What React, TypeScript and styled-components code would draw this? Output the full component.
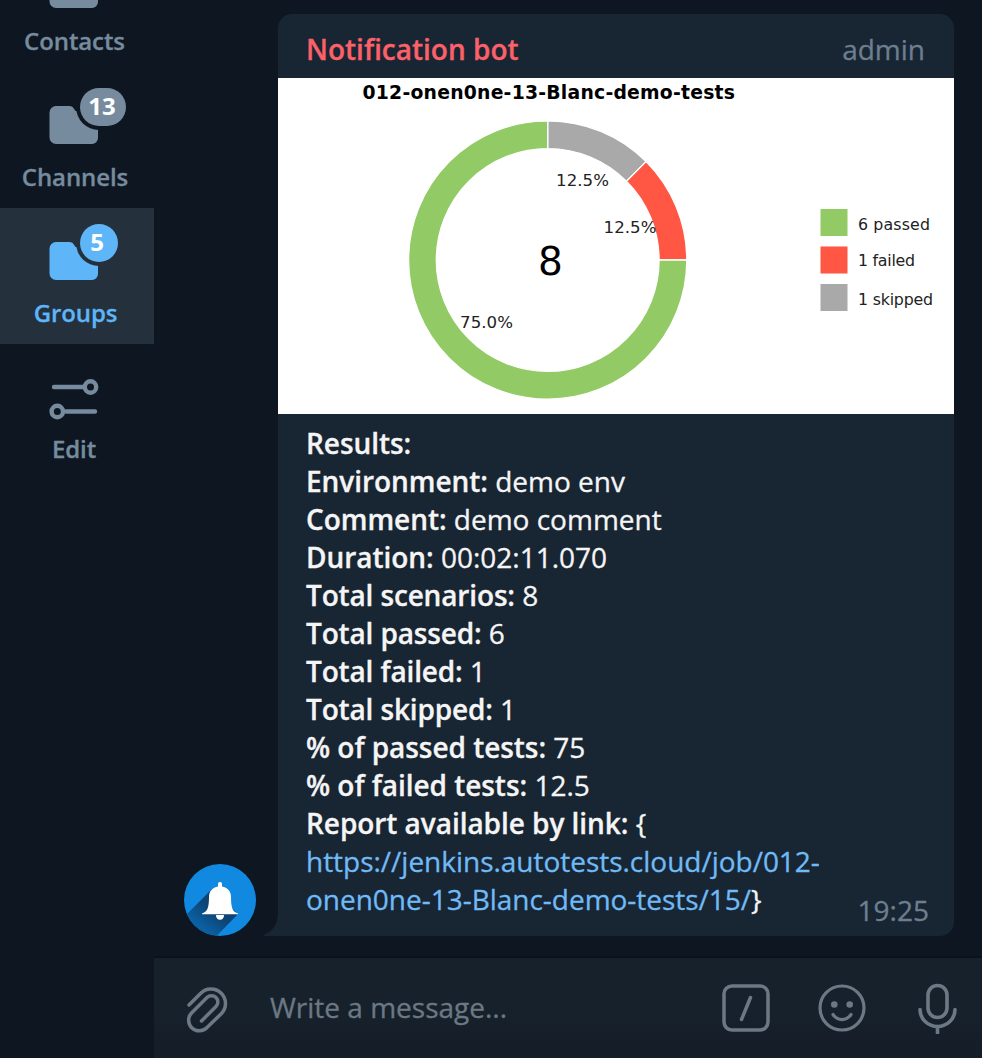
import React from "react";
import styled, { createGlobalStyle } from "styled-components";

const GlobalStyle = createGlobalStyle`
  * { box-sizing: border-box; }
  html, body { margin: 0; padding: 0; background: #0e1621; }
  body { font-family: "Open Sans", "Noto Sans", sans-serif; overflow: hidden; }
`;

const Window = styled.div`
  display: flex;
  width: 982px;
  height: 1058px;
  overflow: hidden;
  background: #0e1621;
  -webkit-text-stroke: 0.3px;
`;

const Sidebar = styled.nav`
  display: flex;
  flex-direction: column;
  flex: none;
  width: 154px;
  margin-top: -64px;
`;

const Folder = styled.div<{ $active?: boolean }>`
  display: flex;
  flex-direction: column;
  align-items: center;
  flex: none;
  height: 136px;
  background: ${(p) => (p.$active ? "#25303d" : "transparent")};
  color: ${(p) => (p.$active ? "#5eb5f7" : "#768c9e")};
`;

const FolderIcon = styled.svg`
  display: block;
  flex: none;
  width: 154px;
  height: 88px;
`;

const FolderLabel = styled.span<{ $shift?: number }>`
  font-size: 24px;
  font-weight: 600;
  line-height: 34px;
  letter-spacing: -0.1px;
  margin-left: ${(p) => p.$shift ?? -4}px;
`;

const BadgeText = styled.text`
  font: 700 24px "Open Sans", sans-serif;
  fill: #fff;
  text-anchor: middle;
`;

const Main = styled.main`
  display: flex;
  flex-direction: column;
  flex: 1;
  min-width: 0;
`;

const Thread = styled.section`
  display: flex;
  align-items: flex-end;
  flex: none;
  height: 956px;
  padding: 14px 28px 20px 30px;
`;

const Avatar = styled.svg`
  display: block;
  flex: none;
  width: 72px;
  height: 72px;
`;

const Tail = styled.svg`
  display: block;
  flex: none;
  width: 14px;
  height: 24px;
  margin-left: 8px;
`;

const Bubble = styled.article`
  display: flex;
  flex-direction: column;
  width: 676px;
  height: 922px;
  overflow: hidden;
  border-radius: 14px 14px 14px 0;
  background: #182533;
`;

const BubbleHeader = styled.header`
  display: flex;
  justify-content: space-between;
  flex: none;
  height: 64px;
  padding: 16px 29px 0 28px;
  font-size: 28px;
  line-height: 38px;
`;

const Sender = styled.span`
  font-weight: 600;
  color: #fb6169;
`;

const Role = styled.span`
  color: #6d7f8f;
`;

const Chart = styled.svg`
  display: block;
  flex: none;
  width: 676px;
  height: 336px;
  background: #fff;
  font-family: "DejaVu Sans", sans-serif;
  -webkit-text-stroke: 0;
`;

const Caption = styled.div`
  display: flex;
  justify-content: space-between;
  flex: 1;
  padding: 10px 25px 0 28px;
`;

const Lines = styled.div`
  color: #f5f5f5;
  font-size: 28px;
  line-height: 38px;
  white-space: nowrap;
`;

const Line = styled.div``;

const Name = styled.b<{ $tight: boolean }>`
  font-weight: 600;
  letter-spacing: ${(p) => (p.$tight ? "-0.15px" : "-0.05px")};
`;

const Link = styled.span`
  color: #70baf5;
  letter-spacing: -0.02px;
`;

const Time = styled.time`
  align-self: flex-end;
  padding-bottom: 7px;
  color: #6d7f8f;
  font-size: 28px;
  line-height: 38px;
`;

const Composer = styled.footer`
  display: flex;
  align-items: center;
  flex: 1;
  border-top: 2px solid #0a121b;
  padding: 0 25px 0 32px;
  background: linear-gradient(#17212b 0%, #17212b 55%, #151d27 100%);
  color: #6c7883;
`;

const Placeholder = styled.span`
  flex: 1;
  padding: 0 0 2px 42px;
  font-size: 28px;
  line-height: 38px;
`;

const Tool = styled.svg<{ $gap?: number }>`
  display: block;
  flex: none;
  margin-left: ${(p) => p.$gap ?? 0}px;
  fill: none;
  stroke: currentColor;
  stroke-linecap: round;
  stroke-linejoin: round;
`;

const FOLDER = "M56 34h13c3 0 4 1 5.500 3.500l1 1.500H93a5 5 0 0 1 5 5v22a6 6 0 0 1-6 6H56a6.500 6.500 0 0 1-6.500-6.500V40.500a6.500 6.500 0 0 1 6.500-6.500z";

function FolderGlyph({ count, active }: { count?: string; active?: boolean }) {
  const w = count && count.length > 1 ? 46 : 38;
  return (
    <FolderIcon viewBox="0 0 154 88">
      <path d={FOLDER} fill="currentColor" />
      {count && (
        <>
          <rect x={76} y={12} width={w + 8} height={46} rx={23} fill={active ? "#25303d" : "#0e1621"} />
          <rect x={80} y={16} width={w} height={38} rx={19} fill="currentColor" />
          <BadgeText x={79 + w / 2 - (active ? 1 : 0)} y={43}>{count}</BadgeText>
        </>
      )}
    </FolderIcon>
  );
}

const CX = 269.7;
const CY = 182;
const OUTER = 139.1;
const INNER = 111.4;
const point = (deg: number, r: number) => {
  const a = (deg * Math.PI) / 180;
  return `${CX + r * Math.sin(a)} ${CY - r * Math.cos(a)}`;
};
const wedge = (from: number, to: number) => {
  const large = to - from > 180 ? 1 : 0;
  return `M${point(from, OUTER)}A${OUTER} ${OUTER} 0 ${large} 1 ${point(to, OUTER)}L${point(to, INNER)}A${INNER} ${INNER} 0 ${large} 0 ${point(from, INNER)}Z`;
};

const slices = [
  { from: 0, to: 45, color: "#a9a9a9" },
  { from: 45, to: 90, color: "#ff5744" },
  { from: 90, to: 360, color: "#92ca65" },
];

const percents = [
  { x: 278, y: 107.500, text: "12.5%" },
  { x: 325.500, y: 155, text: "12.5%" },
  { x: 182, y: 250, text: "75.0%" },
];

const legend = [
  { y: 131, base: 152, color: "#92ca65", text: "6 passed", width: 72 },
  { y: 168.500, base: 188, color: "#ff5744", text: "1 failed", width: 57 },
  { y: 206, base: 227, color: "#a9a9a9", text: "1 skipped", width: 75 },
];

function ResultChart() {
  return (
    <Chart viewBox="0 0 676 336">
      <text x={84.500} y={21} fontSize={18.800} fontWeight={700} fill="#000" textLength={372.500}>
        012-onen0ne-13-Blanc-demo-tests
      </text>
      {slices.map((s) => (
        <path key={s.color} d={wedge(s.from, s.to)} fill={s.color} stroke="#fff" strokeWidth={1.300} />
      ))}
      {percents.map((p, i) => (
        <text key={i} x={p.x} y={p.y} fontSize={16.600} fill="#222" textLength={53}>
          {p.text}
        </text>
      ))}
      <text x={272.500} y={197} fontSize={39} fill="#000" textAnchor="middle">8</text>
      {legend.map((l) => (
        <React.Fragment key={l.text}>
          <rect x={542.500} y={l.y} width={27} height={27} fill={l.color} />
          <text x={580} y={l.base} fontSize={15.800} fill="#222" textLength={l.width}>{l.text}</text>
        </React.Fragment>
      ))}
    </Chart>
  );
}

const rows: [string, string][] = [
  ["Results:", ""],
  ["Environment:", "demo env"],
  ["Comment:", "demo comment"],
  ["Duration:", "00:02:11.070"],
  ["Total scenarios:", "8"],
  ["Total passed:", "6"],
  ["Total failed:", "1"],
  ["Total skipped:", "1"],
  ["% of passed tests:", "75"],
  ["% of failed tests:", "12.5"],
  ["Report available by link:", "{"],
];

export default function App() {
  return (
    <Window>
      <GlobalStyle />
      <Sidebar>
        <Folder>
          <FolderGlyph />
          <FolderLabel $shift={-5}>Contacts</FolderLabel>
        </Folder>
        <Folder>
          <FolderGlyph count="13" />
          <FolderLabel>Channels</FolderLabel>
        </Folder>
        <Folder $active>
          <FolderGlyph count="5" active />
          <FolderLabel $shift={-3}>Groups</FolderLabel>
        </Folder>
        <Folder>
          <FolderIcon viewBox="0 0 154 88" fill="none" stroke="currentColor" strokeWidth={4.400} strokeLinecap="round">
            <path d="M54 43h29M66 67.500h29" />
            <circle cx={90.500} cy={43} r={5.700} />
            <circle cx={57.300} cy={67.500} r={5.700} />
          </FolderIcon>
          <FolderLabel $shift={-6}>Edit</FolderLabel>
        </Folder>
      </Sidebar>
      <Main>
        <Thread>
          <Avatar viewBox="0 0 72 72">
            <defs>
              <clipPath id="disc"><circle cx={36} cy={36} r={36} /></clipPath>
              <linearGradient id="shade" x1={44} y1={28} x2={16} y2={62} gradientUnits="userSpaceOnUse">
                <stop offset="0" stopColor="#0b3d68" />
                <stop offset="0.55" stopColor="#0d4576" />
                <stop offset="1" stopColor="#0b60a3" />
              </linearGradient>
            </defs>
            <g clipPath="url(#disc)">
              <rect width={72} height={72} fill="#1289e0" />
              <path d="M28 25L0 53v34h18l36-37z" fill="url(#shade)" />
            </g>
            <path d="M36 18c1.300 0 2 .8 2 2v2.500c5.500 1 9 4.500 9 10.500 0 8 1 13 4 15l3 1.500v.8H18v-.8l3-1.500c3-2 4-7 4-15 0-6 3.500-9.500 9-10.500V20c0-1.200.700-2 2-2z" fill="#fff" />
            <path d="M32 51h8c0 3-1.500 4.800-4 4.800S32 54 32 51z" fill="#fff" />
          </Avatar>
          <Tail viewBox="0 0 14 24">
            <path d="M14 0C14 12 9 19 1 22c-1.500.8-1 2 0 2h13z" fill="#182533" />
          </Tail>
          <Bubble>
            <BubbleHeader>
              <Sender>Notification bot</Sender>
              <Role>admin</Role>
            </BubbleHeader>
            <ResultChart />
            <Caption>
              <Lines>
                {rows.map(([name, value]) => (
                  <Line key={name}><Name $tight={name.startsWith("Total")}>{name}</Name> {value}</Line>
                ))}
                <Line><Link>https://jenkins.autotests.cloud/job/012-</Link></Line>
                <Line><Link>onen0ne-13-Blanc-demo-tests/15/</Link>{"}"}</Line>
              </Lines>
              <Time>19:25</Time>
            </Caption>
          </Bubble>
        </Thread>
        <Composer>
          <Tool width={42} height={50} viewBox="0 0 42 50" strokeWidth={3.500}>
            <path d="M3 22L14.500 10.500A14.300 14.300 0 0 1 35.500 30.500L21 44.500A10.500 10.500 0 0 1 5.500 30L21 14.500A6.200 6.200 0 0 1 30 23.500L15.500 38" />
          </Tool>
          <Placeholder>Write a message...</Placeholder>
          <Tool width={48} height={48} viewBox="0 0 48 48" strokeWidth={3.500}>
            <rect x={2} y={2} width={44} height={44} rx={8} />
            <path d="M28.500 13.500L19.500 35.500" />
          </Tool>
          <Tool width={48} height={48} viewBox="0 0 48 48" strokeWidth={3.200} $gap={48}>
            <circle cx={24} cy={24} r={22} />
            <circle cx={16.300} cy={20.500} r={3.300} fill="currentColor" stroke="none" />
            <circle cx={31.700} cy={20.500} r={3.300} fill="currentColor" stroke="none" />
            <path d="M15 30.500c4.500 6.700 13.500 6.700 18 0" />
          </Tool>
          <Tool width={39} height={52} viewBox="0 0 39 52" strokeWidth={3.600} $gap={52}>
            <rect x={10} y={3.500} width={19} height={32} rx={9.500} />
            <path d="M2 27.500a17.500 17 0 0 0 35 0M19.500 45v6" strokeLinecap="round" />
          </Tool>
        </Composer>
      </Main>
    </Window>
  );
}
